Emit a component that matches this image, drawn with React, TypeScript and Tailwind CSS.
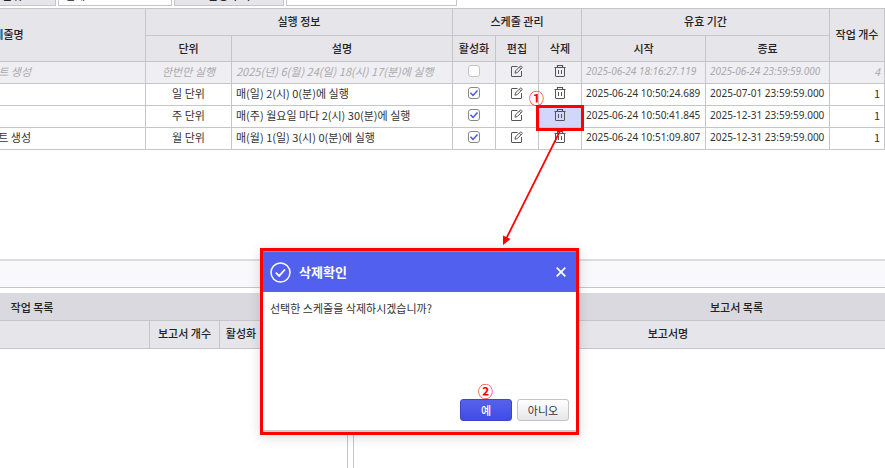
import React from "react";

type Schedule = {
  name: string;
  unit: string;
  description: string;
  active: boolean;
  start: string;
  end: string;
  jobs: number;
  expired?: boolean;
  selected?: boolean;
};

const schedules: Schedule[] = [
  { name: "리포트 생성", unit: "한번만 실행", description: "2025(년) 6(월) 24(일) 18(시) 17(분)에 실행", active: false, start: "2025-06-24 18:16:27.119", end: "2025-06-24 23:59:59.000", jobs: 4, expired: true },
  { name: "", unit: "일 단위", description: "매(일) 2(시) 0(분)에 실행", active: true, start: "2025-06-24 10:50:24.689", end: "2025-07-01 23:59:59.000", jobs: 1 },
  { name: "", unit: "주 단위", description: "매(주) 월요일 마다 2(시) 30(분)에 실행", active: true, start: "2025-06-24 10:50:41.845", end: "2025-12-31 23:59:59.000", jobs: 1, selected: true },
  { name: "리포트 생성", unit: "월 단위", description: "매(월) 1(일) 3(시) 0(분)에 실행", active: true, start: "2025-06-24 10:51:09.807", end: "2025-12-31 23:59:59.000", jobs: 1 },
];

const th = "border-r border-b border-[#c6c6ca] p-0 pb-[2px] text-center font-medium text-[#222]";
const td = "h-[22px] border-r border-b border-[#c6c6ca] p-0 pb-[3px] whitespace-nowrap";

function EditIcon() {
  return (
    <svg width="12" height="12" viewBox="0 0 12 12" fill="none" stroke="#555" strokeWidth="1" className="block">
      <path d="M6.500 1.500H1a.5.5 0 0 0-.5.5v9a.5.5 0 0 0 .5.5h9a.5.5 0 0 0 .5-.5V6" />
      <path d="M4 8.200l.4-2.200L9.200 1.200q.6-.6 1.200 0l.5.5q.5.6 0 1.200L6.200 7.700z" />
      <path d="M8.300 2.100l1.700 1.700" />
    </svg>
  );
}

function TrashIcon() {
  return (
    <svg width="12" height="12" viewBox="0 0 12 12" fill="none" stroke="#555" strokeWidth="1" className="block">
      <path d="M.5 2.500h11M3.500 2.500v-2h5v2" strokeWidth="1.2" />
      <path d="M1.500 2.500v8.500a.5.5 0 0 0 .5.5h8a.5.5 0 0 0 .5-.5V2.500M4.500 5v4M7.500 5v4" />
    </svg>
  );
}

function ActiveBox({ checked, label }: { checked: boolean; label: string }) {
  return (
    <label className="mx-auto grid size-3 place-items-center">
      <input
        type="checkbox"
        aria-label={label}
        defaultChecked={checked}
        className="peer col-start-1 row-start-1 size-3 appearance-none rounded-[3px] border border-[#c4c4c8] bg-white checked:border-[#888]"
      />
      <svg width="10" height="10" viewBox="0 0 10 10" fill="none" stroke="#4554f0" strokeWidth="1.5" className="invisible col-start-1 row-start-1 peer-checked:visible">
        <path d="M1.500 4.800L4 7.400l4.500-5" />
      </svg>
    </label>
  );
}

function FilterBar() {
  const label = "flex items-center justify-center border border-[#c6c6ca] bg-[#e6e5ea] font-medium";
  return (
    <div className="-mt-4 flex h-[22px] shrink-0 gap-[2px]">
      <label htmlFor="unit" className={`${label} -ml-14 w-28 pl-6`}>단위</label>
      <select id="unit" className="w-[114px] appearance-none border border-[#c6c6ca] bg-white px-1.5">
        <option>전체</option>
      </select>
      <label htmlFor="keyword" className={`${label} w-[110px]`}>실행 주기</label>
      <input id="keyword" className="w-[171px] border border-[#c6c6ca] bg-white" />
    </div>
  );
}

function ScheduleTable() {
  return (
    <table className="mt-[2px] -ml-[138px] w-[calc(100%+138px)] shrink-0 table-fixed border-separate border-spacing-0 border-t border-[#c6c6ca]">
      <colgroup>
        <col className="w-[284px]" />
        <col className="w-[86px]" />
        <col />
        <col className="w-[43px]" />
        <col className="w-[43px]" />
        <col className="w-[43px]" />
        <col className="w-[124px]" />
        <col className="w-[124px]" />
        <col className="w-[55px]" />
      </colgroup>
      <thead className="bg-[#e6e5ea]">
        <tr>
          <th rowSpan={2} className={th}>스케줄명</th>
          <th colSpan={2} className={`${th} h-[27px]`}>실행 정보</th>
          <th colSpan={3} className={th}>스케줄 관리</th>
          <th colSpan={2} className={th}>유효 기간</th>
          <th rowSpan={2} className={`${th} whitespace-nowrap`}>작업 개수</th>
        </tr>
        <tr>
          {["단위", "설명", "활성화", "편집", "삭제", "시작", "종료"].map((title) => (
            <th key={title} className={`${th} h-[26px]`}>{title}</th>
          ))}
        </tr>
      </thead>
      <tbody>
        {schedules.map((s) => (
          <tr key={s.start} className={s.expired ? "bg-[#efeef3] text-[#aaa] italic" : "bg-white text-[#333]"}>
            <td className={`${td} pl-[116px]`}>{s.name}</td>
            <td className={`${td} text-center`}>{s.unit}</td>
            <td className={`${td} pl-1`}>{s.description}</td>
            <td className={td}><ActiveBox checked={s.active} label={`${s.unit} 활성화`} /></td>
            <td className={td}>
              <button type="button" aria-label="편집" className="mx-auto block"><EditIcon /></button>
            </td>
            <td className={`${td} ${s.selected ? "bg-[#d3d6fb]" : ""}`}>
              <button type="button" aria-label="삭제" className="mx-auto block"><TrashIcon /></button>
            </td>
            <td className={`${td} px-1 font-['Noto_Sans',sans-serif] text-[10px]`}>{s.start}</td>
            <td className={`${td} px-1 font-['Noto_Sans',sans-serif] text-[10px]`}>{s.end}</td>
            <td className={`${td} pr-1 text-right`}>{s.jobs}</td>
          </tr>
        ))}
      </tbody>
    </table>
  );
}

function ListPanels() {
  const title = "flex h-7 items-center justify-center border-b border-[#c6c6ca] bg-[#d9d9df] font-medium";
  const head = "h-7 border-r border-b border-[#c6c6ca] bg-[#e6e5ea] p-0 pb-[3px] font-medium";
  return (
    <div className="mt-[5px] flex min-h-0 flex-1 gap-[5px]">
      <section className="-ml-[283px] w-[631px] shrink-0 border-r border-[#c6c6ca]">
        <h2 className={title}>작업 목록</h2>
        <table className="w-full table-fixed border-separate border-spacing-0">
          <thead>
            <tr>
              <th className={head} aria-label="작업" />
              <th className={`${head} w-[70px]`}>보고서 개수</th>
              <th className={`${head} w-[43px]`}>활성화</th>
              <th className={`${head} w-[84px]`} aria-label="관리" />
            </tr>
          </thead>
        </table>
      </section>
      <section className="-mr-[234px] min-w-0 flex-1 border-l border-[#c6c6ca]">
        <h2 className={title}>보고서 목록</h2>
        <table className="w-full table-fixed border-separate border-spacing-0">
          <thead>
            <tr>
              <th className={head}>보고서명</th>
              <th className={`${head} w-[136px]`} aria-label="관리" />
            </tr>
          </thead>
        </table>
      </section>
    </div>
  );
}

function ConfirmDialog() {
  const button = "h-[22px] w-[52px] rounded-[3px] border bg-linear-to-b";
  return (
    <div
      role="dialog"
      aria-labelledby="confirm-title"
      className="absolute top-[248px] left-[260px] flex h-[187px] w-[319px] flex-col border-[3px] border-[#f00] bg-white shadow-[0_2px_12px_rgba(0,0,0,0.14)]"
    >
      <header className="flex h-[41px] shrink-0 items-center border-t border-[#8d90cf] bg-[#5260f0] pr-[10px] pl-[7px] text-white">
        <svg width="21" height="21" viewBox="0 0 21 21" fill="none" stroke="white" strokeWidth="1.5">
          <circle cx="10.500" cy="10.500" r="9.500" />
          <path d="M5.800 10.600l3.400 3.300 5.800-6.400" strokeWidth="1.800" />
        </svg>
        <h1 id="confirm-title" className="ml-2 flex-1 text-[13px] font-bold">삭제확인</h1>
        <button type="button" aria-label="닫기">
          <svg width="10" height="10" viewBox="0 0 10 10" stroke="white" strokeWidth="1.700">
            <path d="M.7.700l8.600 8.600M9.300.700L.7 9.300" />
          </svg>
        </button>
      </header>
      <p className="flex-1 px-[7px] pt-2 text-[#333]">선택한 스케줄을 삭제하시겠습니까?</p>
      <footer className="flex justify-end gap-[5px] border-b-2 border-[#ccc] px-[7px] pb-[9px]">
        <button type="button" className={`${button} border-[#3d47c4] from-[#5762ea] to-[#3f4be6] font-medium text-white`}>예</button>
        <button type="button" className={`${button} border-[#c4c4c8] from-white to-[#e6e6ea] text-[#333]`}>아니오</button>
      </footer>
    </div>
  );
}

function Callouts() {
  const mark = "absolute text-[15px] leading-none font-bold text-[#f00]";
  return (
    <>
      <div className="absolute top-[105px] left-[536px] h-[26px] w-12 border-[3px] border-[#f00]" />
      <svg width="70" height="120" viewBox="0 0 70 120" className="absolute top-[128px] left-[498px]">
        <path d="M62 3L8 111" stroke="#f00" strokeWidth="1.700" />
        <path d="M5 117V107.500L12.500 111z" fill="#f00" />
      </svg>
      <span className={`${mark} top-[90px] left-[529px]`}>①</span>
      <span className={`${mark} top-[383px] left-[478px]`}>②</span>
    </>
  );
}

export default function App() {
  return (
    <main className="relative flex h-screen flex-col overflow-hidden bg-white font-['Noto_Sans_CJK_KR',sans-serif] text-[11px] leading-4 text-[#222]">
      <FilterBar />
      <ScheduleTable />
      <div className="mt-[109px] h-[29px] shrink-0 border-t-2 border-b border-[#c6c6ca] border-t-[#dcdce0] bg-[#f9f9fc]" />
      <ListPanels />
      <ConfirmDialog />
      <Callouts />
    </main>
  );
}
